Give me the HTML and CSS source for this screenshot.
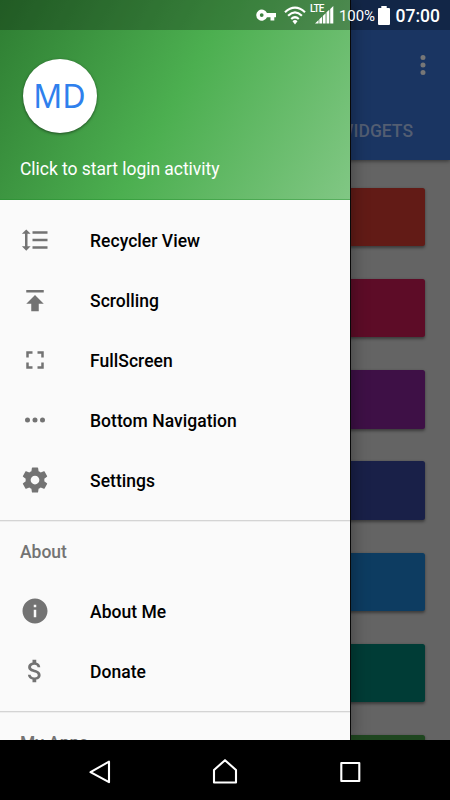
FILE: index.html
```html
<!DOCTYPE html>
<html lang="en">
<head>
<meta charset="utf-8">
<title>Navigation drawer</title>
<link rel="stylesheet" href="styles.css">
</head>
<body>
<div class="phone">
  <div class="screen">
    <main class="app">
      <header class="appbar">
        <svg class="more" viewBox="0 0 24 24"><path d="M12 8a2 2 0 1 0 0-4 2 2 0 0 0 0 4zm0 2a2 2 0 1 0 0 4 2 2 0 0 0 0-4zm0 6a2 2 0 1 0 0 4 2 2 0 0 0 0-4z"/></svg>
        <div class="tab">WIDGETS</div>
      </header>
      <div class="cards">
        <div class="card red"></div>
        <div class="card pink"></div>
        <div class="card purple"></div>
        <div class="card indigo"></div>
        <div class="card blue"></div>
        <div class="card teal"></div>
        <div class="card green"></div>
      </div>
    </main>
    <aside class="drawer">
      <div class="header">
        <div class="avatar">MD</div>
        <div class="login">Click to start login activity</div>
      </div>
      <nav class="menu">
        <div class="item"><svg viewBox="0 0 24 24"><path d="M6 7h2.500L5 3.500 1.500 7H4v10H1.500L5 20.500 8.500 17H6V7zm4-2v2h12V5H10zm0 14h12v-2H10v2zm0-6h12v-2H10v2z"/></svg><span>Recycler View</span></div>
        <div class="item"><svg viewBox="0 0 24 24"><path d="M5 4v2h14V4H5zm0 11h4v6h6v-6h4l-7-7-7 7z"/></svg><span>Scrolling</span></div>
        <div class="item"><svg viewBox="0 0 24 24"><path d="M7 14H5v5h5v-2H7v-3zm-2-4h2V7h3V5H5v5zm12 7h-3v2h5v-5h-2v3zM14 5v2h3v3h2V5h-5z"/></svg><span>FullScreen</span></div>
        <div class="item"><svg viewBox="0 0 24 24"><path d="M6 10a2 2 0 1 0 0 4 2 2 0 0 0 0-4zm12 0a2 2 0 1 0 0 4 2 2 0 0 0 0-4zm-6 0a2 2 0 1 0 0 4 2 2 0 0 0 0-4z"/></svg><span>Bottom Navigation</span></div>
        <div class="item"><svg viewBox="0 0 24 24"><path d="M19.430 12.980c.04-.32.07-.64.07-.98s-.03-.66-.07-.98l2.110-1.650c.19-.15.24-.42.12-.64l-2-3.460c-.12-.22-.39-.3-.61-.22l-2.490 1c-.52-.4-1.080-.73-1.690-.98l-.38-2.650C14.460 2.180 14.250 2 14 2h-4c-.25 0-.46.18-.49.42l-.38 2.650c-.61.25-1.170.59-1.690.98l-2.490-1c-.23-.09-.49 0-.61.22l-2 3.460c-.13.22-.07.49.12.64l2.110 1.650c-.04.32-.07.65-.07.98s.03.66.07.98l-2.110 1.650c-.19.15-.24.42-.12.64l2 3.460c.12.22.39.3.61.22l2.490-1c.52.4 1.080.73 1.690.98l.38 2.650c.03.24.24.42.49.42h4c.25 0 .46-.18.49-.42l.38-2.650c.61-.25 1.170-.59 1.690-.98l2.490 1c.23.09.49 0 .61-.22l2-3.460c.12-.22.07-.49-.12-.64l-2.110-1.650zM12 15.500c-1.930 0-3.500-1.570-3.500-3.500s1.570-3.500 3.500-3.500 3.500 1.570 3.500 3.500-1.570 3.500-3.500 3.500z"/></svg><span>Settings</span></div>
        <div class="divider"></div>
        <div class="subheader">About</div>
        <div class="item"><svg viewBox="0 0 24 24"><path d="M12 2C6.480 2 2 6.480 2 12s4.480 10 10 10 10-4.480 10-10S17.520 2 12 2zm1 15h-2v-6h2v6zm0-8h-2V7h2v2z"/></svg><span>About Me</span></div>
        <div class="item"><svg viewBox="0 0 24 24"><path d="M11.800 10.900c-2.270-.59-3-1.200-3-2.150 0-1.090 1.010-1.850 2.700-1.850 1.780 0 2.440.85 2.500 2.100h2.210c-.07-1.720-1.120-3.300-3.210-3.810V3h-3v2.160c-1.940.42-3.500 1.680-3.500 3.610 0 2.310 1.910 3.460 4.700 4.130 2.500.6 3 1.480 3 2.410 0 .69-.49 1.790-2.700 1.790-2.060 0-2.870-.92-2.980-2.100h-2.200c.12 2.190 1.760 3.420 3.680 3.830V21h3v-2.150c1.950-.37 3.500-1.500 3.500-3.550 0-2.840-2.430-3.810-4.700-4.400z"/></svg><span>Donate</span></div>
        <div class="divider"></div>
        <div class="subheader">My Apps</div>
      </nav>
    </aside>
    <div class="status">
      <svg class="key" width="20" height="12" viewBox="0 0 20 12"><path fill-rule="evenodd" d="M11 4A5.600 5.600 0 1 0 11 8.200h3.500V11.600h3.800V8.200H20V4zM5.700 4.200a1.900 1.900 0 1 1 0 3.800 1.900 1.900 0 0 1 0-3.800z"/></svg>
      <svg class="wifi" width="22" height="19" viewBox="0 0 22 19"><g fill="none" stroke="#fff" stroke-width="2.200"><path d="M1 6.200Q11-2.800 21 6.200M4.100 9.700Q11 3.200 17.900 9.700M7.200 13Q11 9.500 14.800 13"/></g><path d="M8.500 15.200Q11 12.900 13.500 15.200L11 18.500z"/></svg>
      <div class="cell"><span class="lte">LTE</span><svg width="19" height="18" viewBox="0 0 19 18"><path d="M0 17.500l3.600-3.400v3.400zM4.300 17.500v-4.300l2.700-2.500v6.800zM7.800 17.500V9.900l2.800-2.600v10.200zM11.500 17.500V6.300l2.800-2.600v13.800zM15.200 17.500V2.900L18.300 0v17.500z"/></svg></div>
      <span class="percent">100%</span>
      <svg class="battery" width="12" height="19" viewBox="0 0 12 19"><path d="M3.300 0h5.400v2H11q1 0 1 1v15q0 1-1 1H1q-1 0-1-1V3q0-1 1-1h2.300z"/></svg>
      <span class="clock">07:00</span>
    </div>
  </div>
  <footer class="navbar">
    <svg viewBox="0 0 30 30"><path d="M5.500 16.200L24 5.700v20.500z"/></svg>
    <svg viewBox="0 0 30 30"><path d="M4 26.500V14L15 4.200 26 14v12.500z"/></svg>
    <svg viewBox="0 0 30 30"><path d="M6.300 7h18v18h-18z"/></svg>
  </footer>
</div>
</body>
</html>
```
FILE: styles.css
```css
* { box-sizing: border-box; }
body { margin: 0; font-family: Roboto, sans-serif; background: #000; }
.phone { width: 450px; height: 800px; display: flex; flex-direction: column; overflow: hidden; }
.screen { position: relative; height: 740px; overflow: hidden; }
.app { height: 100%; background: #646464; }
.appbar {
  height: 160px;
  padding: 50px 12.500px 0 0;
  display: flex;
  flex-direction: column;
  align-items: flex-end;
  background: #1a3562;
  box-shadow: 0 1px 4px rgba(0, 0, 0, .5);
}
.more { width: 30px; height: 30px; fill: #777; }
.tab { margin: 40px 24.500px 0 0; font-size: 17.500px; line-height: 22px; font-weight: 500; color: #535e72; }
.cards { display: flex; flex-direction: column; gap: 32.800px; padding: 27.500px 25px 0; }
.card { flex: none; height: 58.500px; border-radius: 2.500px; box-shadow: 0 1.500px 3px rgba(0, 0, 0, .4); }
.red { background: #621b16; }
.pink { background: #5d0c27; }
.purple { background: #3e1046; }
.indigo { background: #192048; }
.blue { background: #0d3c61; }
.teal { background: #003c36; }
.green { background: #1e461f; }
.drawer {
  position: absolute;
  inset: 0 auto 0 0;
  width: 350px;
  overflow: hidden;
  background: #fafafa;
  box-shadow: 1px 0 0 #080808, 2px 0 16px rgba(0, 0, 0, .35);
}
.header {
  height: 200px;
  padding: 59px 20px 0;
  background: linear-gradient(119.700deg, #2e7d32, #4caf50 50%, #81c784);
  box-shadow: inset 0 -1px 0 rgba(30, 140, 40, .4);
  color: #fff;
}
.avatar {
  width: 74px;
  height: 74px;
  margin-left: 3px;
  border-radius: 50%;
  background: #fff;
  color: #2f80ed;
  font: 32px/74px "Noto Sans", sans-serif;
  text-align: center;
  text-indent: -1px;
  box-shadow: 0 1px 3px rgba(0, 0, 0, .5);
}
.login { margin-top: 25px; font-size: 17.500px; line-height: 22px; letter-spacing: -.04px; }
.menu { padding-top: 10px; }
.item { height: 60px; padding-left: 20px; display: flex; align-items: center; gap: 40px; font-size: 17.500px; font-weight: 500; letter-spacing: .04px; color: #000; }
.item span { padding-top: 2px; }
.item svg { width: 30px; height: 30px; fill: #737373; }
.divider { height: 1px; margin: 10px 0; background: #d4d4d4; box-shadow: 0 1px 0 #eee; }
.subheader { height: 50px; padding-left: 20px; font-size: 17.500px; line-height: 43px; font-weight: 500; color: #737373; }
.status {
  position: absolute;
  inset: 0 0 auto;
  height: 30px;
  padding-left: 256px;
  display: flex;
  align-items: center;
  background: rgba(0, 0, 0, .27);
  color: #fff;
}
.status svg { flex: none; fill: #fff; }
.wifi { margin-left: 8px; }
.cell { position: relative; width: 19px; height: 18px; margin: 0 0 1px 9px; }
.cell svg { display: block; }
.lte { position: absolute; left: -5px; top: -3px; font-size: 10px; line-height: 12px; font-weight: 500; letter-spacing: -.8px; }
.percent { width: 34px; margin-left: 5px; padding-top: 2px; font-size: 15px; letter-spacing: -.1px; white-space: nowrap; }
.battery { margin-left: 5px; }
.clock { margin-left: 5.500px; padding-top: 1px; font-size: 17.500px; font-weight: 500; }
.navbar { height: 60px; display: flex; justify-content: space-between; padding: 16px 85px 0; background: #000; }
.navbar svg { width: 30px; height: 30px; fill: none; stroke: #fff; stroke-width: 2.100; stroke-linejoin: round; }
```
